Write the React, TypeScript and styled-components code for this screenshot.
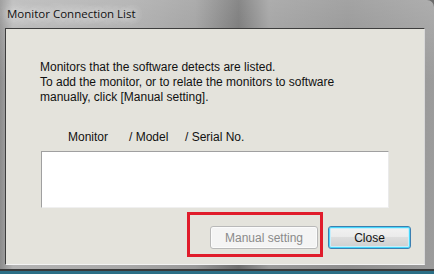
import React from "react";
import styled, { createGlobalStyle } from "styled-components";

const GlobalStyle = createGlobalStyle`
  html, body {
    margin: 0;
    padding: 0;
    width: 434px;
    height: 274px;
    overflow: hidden;
    background: #6b6b6b;
  }
`;

const columns = [
  { label: "Monitor", width: 61 },
  { label: "/ Model", width: 56 },
  { label: "/ Serial No.", width: 80 },
];

export default function App() {
  return (
    <>
      <GlobalStyle />
      <Window>
        <TitleBar>
          <TitleText>Monitor Connection List</TitleText>
        </TitleBar>
        <Client>
          <Message>
            Monitors that the software detects are listed.
            <br />
            To add the monitor, or to relate the monitors to software
            <br />
            manually, click [Manual setting].
          </Message>
          <HeaderRow>
            {columns.map((c) => (
              <HeaderCell key={c.label} $width={c.width}>
                {c.label}
              </HeaderCell>
            ))}
          </HeaderRow>
          <ListBox />
          <ButtonRow>
            <Highlight>
              <Button disabled>Manual setting</Button>
            </Highlight>
            <Button $primary>Close</Button>
          </ButtonRow>
        </Client>
      </Window>
    </>
  );
}

const Window = styled.div`
  width: 434px;
  height: 274px;
  box-sizing: border-box;
  display: flex;
  flex-direction: column;
  padding: 0 9px 9px 5px;
  border-top-right-radius: 7px;
  background:
    linear-gradient(180deg, rgba(255, 255, 255, 0.18) 0%, rgba(255, 255, 255, 0) 30%),
    linear-gradient(
      90deg,
      #8c8c8c 0%,
      #b4b4b4 3%,
      #a8a8a8 30%,
      #9a9a9a 45%,
      #6e6e6e 55%,
      #9b9b9b 62%,
      #8f8f8f 80%,
      #9c9c9c 100%
    );
  box-shadow: inset 0 -3px 0 #2c6f86, inset 0 -5px 0 #3a3a3a;
  font-family: "Liberation Sans", Arial, sans-serif;
`;

const TitleBar = styled.div`
  height: 28px;
  display: flex;
  align-items: center;
  padding-left: 2px;
  padding-bottom: 2px;
  box-sizing: border-box;
`;

const TitleText = styled.span`
  font-family: "Open Sans", "Noto Sans", sans-serif;
  font-size: 11.5px;
  color: #111;
  padding: 0 6px 0 0;
  text-shadow: 0 0 8px #f0f0f0, 0 0 12px #e6e6e6, 0 0 14px #dddddd;
`;

const Client = styled.div`
  flex: 1;
  box-sizing: border-box;
  background: #e4e3dc;
  border: 1px solid #3d3d3d;
  border-bottom-color: #f4f4f4;
  border-right-color: #d8d8d8;
  display: flex;
  flex-direction: column;
  padding: 31px 13px 0 34px;
`;

const Message = styled.div`
  font-size: 12px;
  line-height: 15px;
  color: #111;
`;

const HeaderRow = styled.div`
  display: flex;
  margin-top: 25px;
  padding-left: 28px;
  font-size: 12px;
  line-height: 15px;
  color: #111;
`;

const HeaderCell = styled.div<{ $width: number }>`
  width: ${(p) => p.$width}px;
  white-space: nowrap;
`;

const ListBox = styled.div`
  margin-top: 6px;
  margin-left: 1px;
  width: 348px;
  height: 57px;
  box-sizing: border-box;
  background: #fff;
  border-top: 1px solid #a0a0a0;
  border-left: 1px solid #a0a0a0;
  border-right: 1px solid #eaeaea;
  border-bottom: 1px solid #f0f0f0;
`;

const ButtonRow = styled.div`
  display: flex;
  justify-content: flex-end;
  align-items: flex-start;
  gap: 5px;
  margin-top: 4px;
`;

const Highlight = styled.div`
  border: 3px solid #e01c2b;
  padding: 11px 2px 5px 20px;
`;

const Button = styled.button<{ $primary?: boolean }>`
  height: 23px;
  width: ${(p) => (p.$primary ? 83 : 108)}px;
  box-sizing: border-box;
  border-radius: 3px;
  font-family: "Liberation Sans", Arial, sans-serif;
  font-size: 12px;
  padding: 0;
  margin-top: ${(p) => (p.$primary ? 14 : 0)}px;
  color: ${(p) => (p.$primary ? "#111" : "#8a8a8a")};
  border: 1px solid ${(p) => (p.$primary ? "#3c7fb1" : "#b9b9b9")};
  background: ${(p) =>
    p.$primary
      ? "linear-gradient(180deg, #f2f2f2 0%, #ebebeb 45%, #dddddd 50%, #cfcfcf 100%)"
      : "#f4f4f4"};
  box-shadow: ${(p) =>
    p.$primary ? "inset 0 0 0 1px #48d8fb, inset 0 0 0 2px #c8eefb" : "inset 0 0 0 1px #fbfbfb"};
`;
